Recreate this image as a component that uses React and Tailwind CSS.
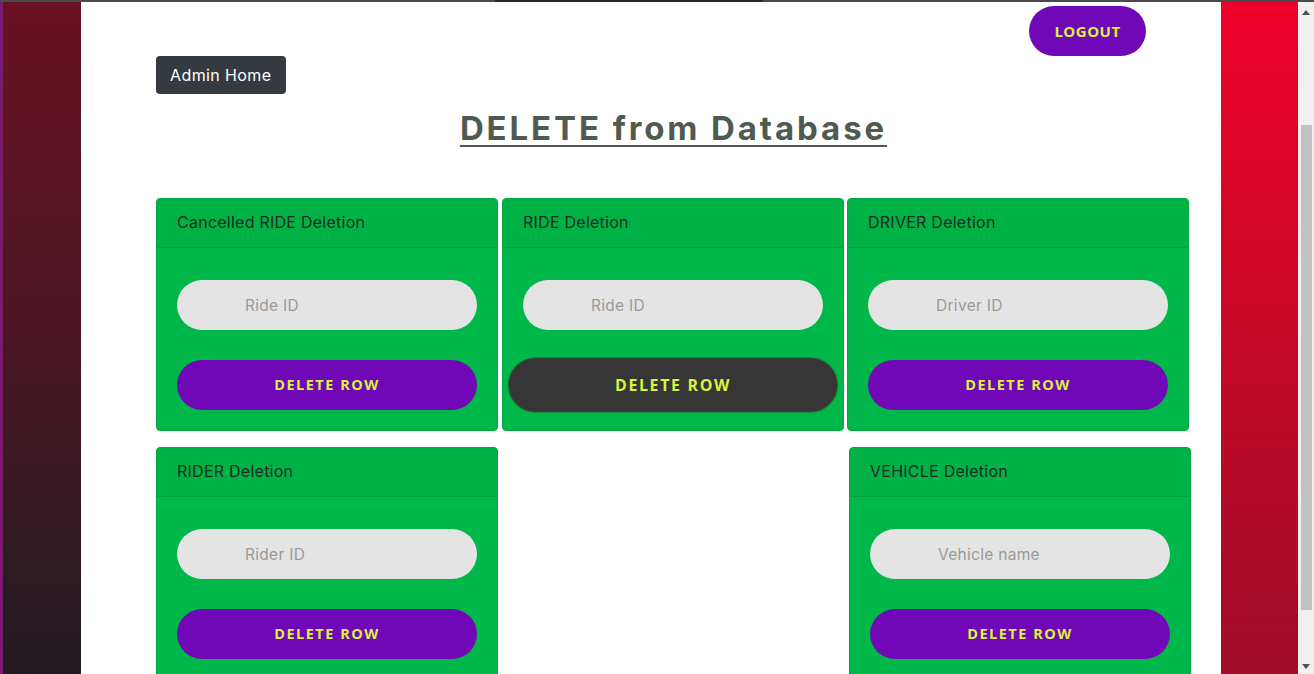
import React from "react";

const poppins = { fontFamily: "Inter, 'Noto Sans', sans-serif" };

function Card({ title, placeholder, hovered, className = "" }) {
  return (
    <div
      className={`w-[342px] h-[233px] shrink-0 rounded-[4px] border border-[#00a843] bg-[#00b74a] ${className}`}
    >
      <div className="h-[49px] flex items-center pl-[20px] pb-[2px] bg-[#00b145] border-b border-[#00a040] rounded-t-[4px] text-[16px] tracking-[0.25px] text-[#1c2e24]" style={poppins}>
        {title}
      </div>
      <div className="flex flex-col items-center pt-[32px]">
        <input
          placeholder={placeholder}
          className="w-[300px] h-[50px] rounded-full bg-[#e4e4e4] pl-[68px] text-[15.5px] tracking-[0.3px] outline-none placeholder:text-[#9a9a9a]"
          style={poppins}
        />
        {hovered ? (
          <button className="mt-[30px] w-[300px] h-[50px] rounded-full bg-[#363636] border border-[#2c5a34] scale-110 text-[14.5px] font-bold tracking-[1.5px] text-[#d7f33c] font-['Open_Sans',sans-serif]">
            DELETE ROW
          </button>
        ) : (
          <button className="mt-[30px] w-[300px] h-[50px] rounded-full bg-[#7008b7] text-[14.5px] font-bold tracking-[1.5px] text-[#d7f33c] font-['Open_Sans',sans-serif]">
            DELETE ROW
          </button>
        )}
      </div>
    </div>
  );
}

export default function App() {
  return (
    <div className="w-[1314px] h-[674px] overflow-hidden flex flex-col bg-white">
      <div className="h-[2px] w-full flex">
        <div className="w-[495px] bg-[#4a4a4a]" />
        <div className="w-[268px] bg-[#2a2a2a]" />
        <div className="flex-1 bg-[#4a4a4a]" />
      </div>
      <div className="flex flex-1 min-h-0">
        <div className="w-[81px] flex">
          <div className="w-[3px] bg-[#7a1c6c]" />
          <div className="flex-1 bg-linear-to-b from-[#6b1022] via-[#4a1524] to-[#211b21]" />
        </div>
        <div className="w-[1140px] bg-white pl-[75px] pr-[30px] flex flex-col">
          <div className="flex justify-end pr-[45px] pt-[4px]">
            <button className="w-[117px] h-[50px] rounded-full bg-[#7008b7] text-[15px] font-bold tracking-[0.5px] text-[#d7f33c] font-['Open_Sans',sans-serif]">
              LOGOUT
            </button>
          </div>
          <div>
            <button className="h-[38px] px-[14px] rounded-[4px] bg-[#343a40] text-white text-[16px] tracking-[0.4px]" style={poppins}>
              Admin Home
            </button>
          </div>
          <h1 className="mt-[12px] text-center text-[33px] leading-[44px] font-bold tracking-[2.9px] underline underline-offset-[5px] decoration-[2px] text-[#4f5a50]" style={poppins}>
            DELETE from Database
          </h1>
          <div className="mt-[48px] flex">
            <Card title="Cancelled RIDE Deletion" placeholder="Ride ID" />
            <Card title="RIDE Deletion" placeholder="Ride ID" hovered className="ml-[4px]" />
            <Card title="DRIVER Deletion" placeholder="Driver ID" className="ml-[3px]" />
          </div>
          <div className="mt-[16px] flex">
            <Card title="RIDER Deletion" placeholder="Rider ID" />
            <Card title="VEHICLE Deletion" placeholder="Vehicle name" className="ml-[351px]" />
          </div>
        </div>
        <div className="w-[77px] bg-linear-to-b from-[#ee002a] to-[#9f0c27]" />
        <div className="w-[16px] bg-[#f0f0f0] flex flex-col items-center">
          <div className="h-[20px] flex items-center justify-center">
            <svg width="8" height="5" viewBox="0 0 8 5"><path d="M0 5 L4 0 L8 5 Z" fill="#505050" /></svg>
          </div>
          <div className="mt-[103px] w-[11px] h-[485px] bg-[#c1c1c1]" />
          <div className="flex-1" />
          <div className="h-[16px] flex items-center justify-center">
            <svg width="8" height="5" viewBox="0 0 8 5"><path d="M0 0 L4 5 L8 0 Z" fill="#505050" /></svg>
          </div>
        </div>
      </div>
    </div>
  );
}
